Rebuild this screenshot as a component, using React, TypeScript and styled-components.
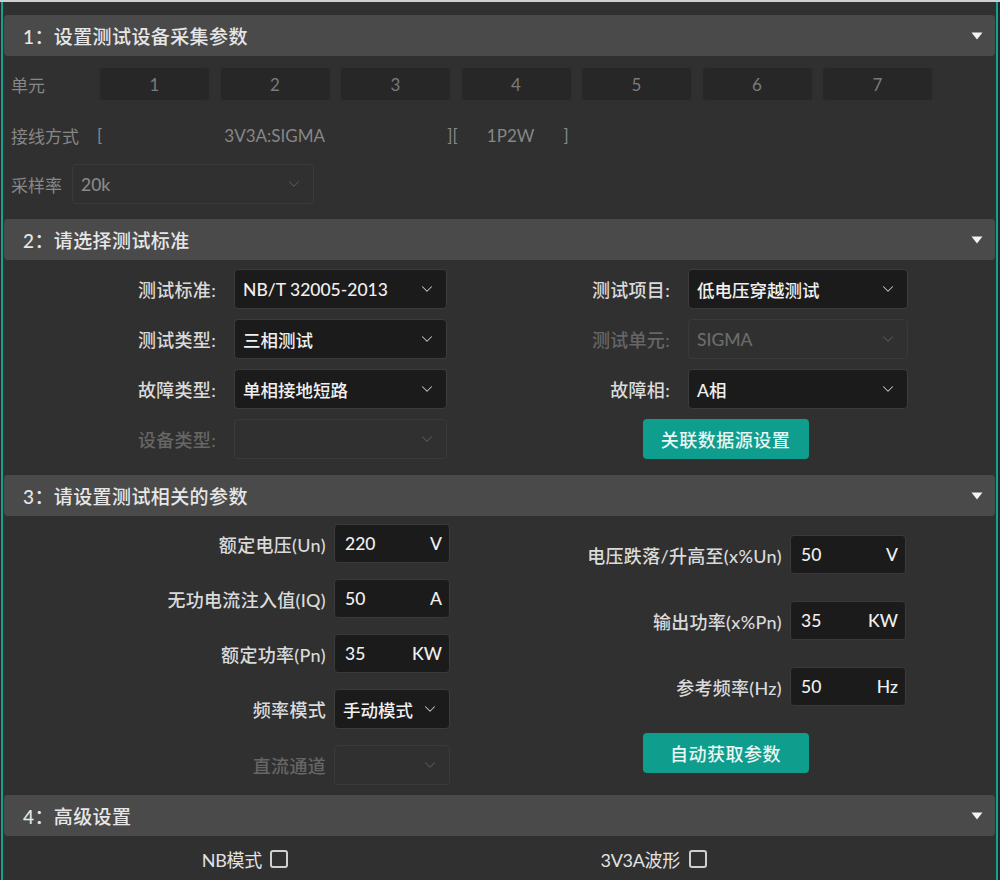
import React from "react";
import styled, { createGlobalStyle } from "styled-components";
import { ChevronDown } from "lucide-react";

const GlobalStyle = createGlobalStyle`
  html, body {
    margin: 0;
    padding: 0;
    background: #242424;
  }
  * {
    box-sizing: border-box;
  }
  body {
    font-family: "Lato", "Noto Sans CJK SC", sans-serif;
  }
`;

const Frame = styled.div`
  width: 1000px;
  height: 880px;
  border-top: 2px solid #cfcfcf;
  background: #242424;
  display: flex;
  overflow: hidden;
`;

const Panel = styled.div`
  width: 997px;
  margin-left: 1px;
  border-left: 2px solid #15a192;
  border-right: 2px solid #15a192;
  background: #303030;
  padding-top: 13px;
  display: flex;
  flex-direction: column;
`;

const Header = styled.div`
  height: 41px;
  margin: 0 1px;
  border-radius: 4px;
  background: #4a4a4a;
  display: flex;
  align-items: center;
  justify-content: space-between;
  padding: 0 12px 0 19px;
  color: #e6e6e6;
  font-size: 19px;
  font-weight: 500;
  letter-spacing: 0.4px;
`;

const Caret = () => (
  <svg width="12" height="8" viewBox="0 0 12 8">
    <path d="M0.5 0.5 H11.5 L6 7.5 Z" fill="#f2f2f2" />
  </svg>
);

const SectionHeader = ({ title }: { title: string }) => (
  <Header>
    <span>{title}</span>
    <Caret />
  </Header>
);

/* ---------- section 1 ---------- */

const AcqBody = styled.div`
  padding: 11px 8px 15px 8px;
  display: flex;
  flex-direction: column;
  color: #878787;
  font-size: 17px;
`;

const UnitRow = styled.div`
  display: flex;
  align-items: center;
  height: 34px;
`;

const AcqLabel = styled.span<{ $w: number }>`
  width: ${(p) => p.$w}px;
  flex: none;
  white-space: nowrap;
`;

const UnitGrid = styled.div`
  display: grid;
  grid-template-columns: repeat(7, 111px);
  column-gap: 9.5px;
`;

const UnitButton = styled.div`
  height: 34px;
  border-radius: 4px;
  background: #272727;
  border: 1px solid #2f2f2f;
  display: flex;
  align-items: center;
  justify-content: center;
  color: #7b7b7b;
  font-size: 17px;
`;

const WiringRow = styled.div`
  margin-top: 17px;
  height: 34px;
  display: flex;
  align-items: center;
`;

const Bracket = styled.span`
  flex: none;
  white-space: nowrap;
`;

const WiringValue = styled.span<{ $w: number }>`
  width: ${(p) => p.$w}px;
  flex: none;
  text-align: center;
`;

const SampleRow = styled.div`
  margin-top: 12px;
  display: flex;
  align-items: center;
`;

/* ---------- shared controls ---------- */

const SelectBox = styled.div<{ $w: number; $disabled?: boolean }>`
  width: ${(p) => p.$w}px;
  height: 40px;
  flex: none;
  border-radius: 4px;
  background: ${(p) => (p.$disabled ? "#303030" : "#1b1b1b")};
  border: 1px solid ${(p) => (p.$disabled ? "#3a3a3a" : "#3c3c3c")};
  display: flex;
  align-items: center;
  justify-content: space-between;
  padding: 0 10px 0 8px;
  color: ${(p) => (p.$disabled ? "#6c6c6c" : "#f0f0f0")};
  font-size: 17.5px;
  font-weight: 500;
  white-space: nowrap;
  svg {
    color: ${(p) => (p.$disabled ? "#5a5a5a" : "#c8c8c8")};
    flex: none;
  }
`;

const Select = ({
  value,
  width,
  disabled,
}: {
  value: string;
  width: number;
  disabled?: boolean;
}) => (
  <SelectBox $w={width} $disabled={disabled}>
    <span>{value}</span>
    <ChevronDown size={18} strokeWidth={1.4} />
  </SelectBox>
);

const UnitInput = styled.div`
  width: 116px;
  height: 39px;
  flex: none;
  border-radius: 4px;
  background: #1b1b1b;
  border: 1px solid #3a3a3a;
  display: flex;
  align-items: center;
  justify-content: space-between;
  padding: 0 7px 0 10px;
  color: #f0f0f0;
  font-size: 17.5px;
  font-weight: 500;
`;

const FieldRow = styled.div<{ $gap: number }>`
  display: flex;
  align-items: center;
  gap: ${(p) => p.$gap}px;
`;

const FieldLabel = styled.span<{ $w: number; $disabled?: boolean }>`
  width: ${(p) => p.$w}px;
  flex: none;
  text-align: right;
  white-space: nowrap;
  font-size: 18px;
  font-weight: 500;
  letter-spacing: 0.3px;
  color: ${(p) => (p.$disabled ? "#666666" : "#dadada")};
`;

const TealButton = styled.div`
  width: 166px;
  height: 40px;
  border-radius: 4px;
  background: #0f9d8d;
  color: #e8f6f4;
  font-size: 18px;
  font-weight: 500;
  display: flex;
  align-items: center;
  justify-content: center;
  align-self: center;
  letter-spacing: 0.5px;
`;

/* ---------- section 2 / 3 / 4 ---------- */

const TwoColumns = styled.div<{ $pt: number; $pb: number }>`
  display: grid;
  grid-template-columns: 494px 1fr;
  padding: ${(p) => p.$pt}px 42px ${(p) => p.$pb}px 0;
`;

const Column = styled.div<{ $gap: number; $pt?: number }>`
  display: flex;
  flex-direction: column;
  gap: ${(p) => p.$gap}px;
  padding-top: ${(p) => p.$pt ?? 0}px;
`;

const CheckBox = styled.div`
  width: 18px;
  height: 18px;
  flex: none;
  border: 2px solid #cfcfcf;
  border-radius: 3px;
`;

const CheckLabel = styled(FieldLabel)`
  color: #e2e2e2;
  font-weight: 400;
  letter-spacing: -0.3px;
`;

const units = ["1", "2", "3", "4", "5", "6", "7"];

export default function App() {
  return (
    <>
      <GlobalStyle />
      <Frame>
        <Panel>
          <SectionHeader title="1：设置测试设备采集参数" />
          <AcqBody>
            <UnitRow>
              <AcqLabel $w={88}>单元</AcqLabel>
              <UnitGrid>
                {units.map((u) => (
                  <UnitButton key={u}>{u}</UnitButton>
                ))}
              </UnitGrid>
            </UnitRow>
            <WiringRow>
              <AcqLabel $w={86}>接线方式</AcqLabel>
              <Bracket>[</Bracket>
              <WiringValue $w={345}>3V3A:SIGMA</WiringValue>
              <Bracket>][</Bracket>
              <WiringValue $w={106}>1P2W</WiringValue>
              <Bracket>]</Bracket>
            </WiringRow>
            <SampleRow>
              <AcqLabel $w={61}>采样率</AcqLabel>
              <SelectBox $w={242} $disabled>
                <span style={{ color: "#8a8a8a" }}>20k</span>
                <ChevronDown size={18} strokeWidth={1.4} />
              </SelectBox>
            </SampleRow>
          </AcqBody>

          <SectionHeader title="2：请选择测试标准" />
          <TwoColumns $pt={9} $pb={16}>
            <Column $gap={10}>
              <FieldRow $gap={18}>
                <FieldLabel $w={213}>测试标准:</FieldLabel>
                <Select value="NB/T 32005-2013" width={213} />
              </FieldRow>
              <FieldRow $gap={18}>
                <FieldLabel $w={213}>测试类型:</FieldLabel>
                <Select value="三相测试" width={213} />
              </FieldRow>
              <FieldRow $gap={18}>
                <FieldLabel $w={213}>故障类型:</FieldLabel>
                <Select value="单相接地短路" width={213} />
              </FieldRow>
              <FieldRow $gap={18}>
                <FieldLabel $w={213} $disabled>
                  设备类型:
                </FieldLabel>
                <Select value="" width={213} disabled />
              </FieldRow>
            </Column>
            <Column $gap={10}>
              <FieldRow $gap={18}>
                <FieldLabel $w={173}>测试项目:</FieldLabel>
                <Select value="低电压穿越测试" width={220} />
              </FieldRow>
              <FieldRow $gap={18}>
                <FieldLabel $w={173} $disabled>
                  测试单元:
                </FieldLabel>
                <Select value="SIGMA" width={220} disabled />
              </FieldRow>
              <FieldRow $gap={18}>
                <FieldLabel $w={173}>故障相:</FieldLabel>
                <Select value="A相" width={220} />
              </FieldRow>
              <TealButton>关联数据源设置</TealButton>
            </Column>
          </TwoColumns>

          <SectionHeader title="3：请设置测试相关的参数" />
          <TwoColumns $pt={8} $pb={10}>
            <Column $gap={16}>
              <FieldRow $gap={8}>
                <FieldLabel $w={323}>额定电压(Un)</FieldLabel>
                <UnitInput>
                  <span>220</span>
                  <span>V</span>
                </UnitInput>
              </FieldRow>
              <FieldRow $gap={8}>
                <FieldLabel $w={323}>无功电流注入值(IQ)</FieldLabel>
                <UnitInput>
                  <span>50</span>
                  <span>A</span>
                </UnitInput>
              </FieldRow>
              <FieldRow $gap={8}>
                <FieldLabel $w={323}>额定功率(Pn)</FieldLabel>
                <UnitInput>
                  <span>35</span>
                  <span>KW</span>
                </UnitInput>
              </FieldRow>
              <FieldRow $gap={8}>
                <FieldLabel $w={323}>频率模式</FieldLabel>
                <SelectBox $w={116}>
                  <span>手动模式</span>
                  <ChevronDown size={18} strokeWidth={1.4} />
                </SelectBox>
              </FieldRow>
              <FieldRow $gap={8}>
                <FieldLabel $w={323} $disabled>
                  直流通道
                </FieldLabel>
                <Select value="" width={116} disabled />
              </FieldRow>
            </Column>
            <Column $gap={27} $pt={11}>
              <FieldRow $gap={8}>
                <FieldLabel $w={285}>电压跌落/升高至(x%Un)</FieldLabel>
                <UnitInput>
                  <span>50</span>
                  <span>V</span>
                </UnitInput>
              </FieldRow>
              <FieldRow $gap={8}>
                <FieldLabel $w={285}>输出功率(x%Pn)</FieldLabel>
                <UnitInput>
                  <span>35</span>
                  <span>KW</span>
                </UnitInput>
              </FieldRow>
              <FieldRow $gap={8}>
                <FieldLabel $w={285}>参考频率(Hz)</FieldLabel>
                <UnitInput>
                  <span>50</span>
                  <span>Hz</span>
                </UnitInput>
              </FieldRow>
              <TealButton>自动获取参数</TealButton>
            </Column>
          </TwoColumns>

          <SectionHeader title="4：高级设置" />
          <TwoColumns $pt={10} $pb={0}>
            <FieldRow $gap={8}>
              <CheckLabel $w={259}>NB模式</CheckLabel>
              <CheckBox />
            </FieldRow>
            <FieldRow $gap={9}>
              <CheckLabel $w={183}>3V3A波形</CheckLabel>
              <CheckBox />
            </FieldRow>
          </TwoColumns>
        </Panel>
      </Frame>
    </>
  );
}
